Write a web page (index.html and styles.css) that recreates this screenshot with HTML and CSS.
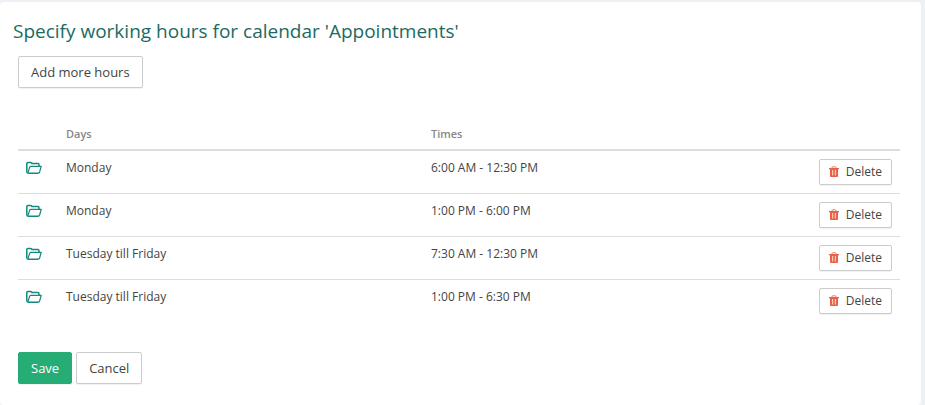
FILE: index.html
```
<!DOCTYPE html>
<html lang="en">
<head>
	<meta charset="UTF-8">
	<title>Working hours</title>
	<link rel="stylesheet" href="styles.css">
</head>
<body>
	<!-- icons used in the table rows -->
	<svg class="sprite" aria-hidden="true">
		<symbol id="folder" viewBox="0 0 16 14">
			<path d="M12 12.2H2.2Q.8 12.2.8 10.8V2.6Q.8 1.4 2 1.4H4.6Q5.8 1.4 6 2.6H12Q13 2.6 13 4V5.2" fill="none" stroke="#12897b" stroke-width="1.5" stroke-linejoin="round"/>
			<path d="M12 12.2Q13.2 12.2 13.6 11L15.2 5.4H5Q4 5.4 3.6 6.4L2 11.6" fill="none" stroke="#12897b" stroke-width="1.2" stroke-linejoin="round"/>
		</symbol>
		<symbol id="trash" viewBox="0 0 10 12">
			<path d="M3 2V1.5Q3 .8 3.7 .8H6.3Q7 .8 7 1.5V2" fill="none" stroke="#ec7a68"/>
			<path d="M0 2H10V3.2H9V10.2Q9 11 8 11H2Q1 11 1 10.2V3.2H0Z" fill="#ea5f4f"/>
			<path d="M3.5 4V9.5M6.5 4V9.5" stroke="#f8cf98"/>
			<path d="M5 4V9.5" stroke="#ee9080"/>
		</symbol>
	</svg>

	<div class="panel">
		<h1>Specify working hours for calendar 'Appointments'</h1>
		<div class="content">
			<button type="button" class="btn">Add more hours</button>

			<table class="hours">
				<thead>
					<tr>
						<th class="icon-col"></th>
						<th class="days-col">Days</th>
						<th>Times</th>
						<th class="action-col"></th>
					</tr>
				</thead>
				<tbody>
					<tr>
						<td><a href="#" aria-label="Edit"><svg class="folder"><use href="#folder"/></svg></a></td>
						<td>Monday</td>
						<td>6:00 AM - 12:30 PM</td>
						<td class="action"><button type="button" class="btn btn-small"><svg class="trash"><use href="#trash"/></svg>Delete</button></td>
					</tr>
					<tr>
						<td><a href="#" aria-label="Edit"><svg class="folder"><use href="#folder"/></svg></a></td>
						<td>Monday</td>
						<td>1:00 PM - 6:00 PM</td>
						<td class="action"><button type="button" class="btn btn-small"><svg class="trash"><use href="#trash"/></svg>Delete</button></td>
					</tr>
					<tr>
						<td><a href="#" aria-label="Edit"><svg class="folder"><use href="#folder"/></svg></a></td>
						<td>Tuesday till Friday</td>
						<td>7:30 AM - 12:30 PM</td>
						<td class="action"><button type="button" class="btn btn-small"><svg class="trash"><use href="#trash"/></svg>Delete</button></td>
					</tr>
					<tr>
						<td><a href="#" aria-label="Edit"><svg class="folder"><use href="#folder"/></svg></a></td>
						<td>Tuesday till Friday</td>
						<td>1:00 PM - 6:30 PM</td>
						<td class="action"><button type="button" class="btn btn-small"><svg class="trash"><use href="#trash"/></svg>Delete</button></td>
					</tr>
				</tbody>
			</table>

			<div class="buttons">
				<button type="submit" class="btn btn-save">Save</button>
				<button type="button" class="btn">Cancel</button>
			</div>
		</div>
	</div>
</body>
</html>
```

FILE: styles.css
```
*{
	box-sizing:border-box;
}
body{
	margin:0;
	padding:2px 4px 0 0;
	background:#edf1f5;
	font-family:"Open Sans", sans-serif;
	font-size:12px;
	line-height:18px;
	color:#444;
}
.sprite{
	display:none;
}
.panel{
	padding:16px 21px 21px 13px;
	background:#fff;
	border-radius:4px;
}
h1{
	margin:0 0 12px;
	font-size:19px;
	line-height:26px;
	font-weight:400;
	color:#1a6b62;
}
.content{
	padding-left:5px;
}
.btn{
	height:32px;
	padding:0 12px;
	border:1px solid #ccc;
	border-radius:2px;
	background:#fff;
	box-shadow:0 1px 1px rgba(0, 0, 0, .06);
	font-family:inherit;
	font-size:13px;
	line-height:18px;
	color:#444;
	cursor:pointer;
}
.btn-small{
	display:inline-flex;
	align-items:center;
	gap:7px;
	height:26px;
	padding:0 9px;
	font-size:12px;
}
.btn-save{
	border-color:#26ad75;
	background:#26ad75;
	font-weight:500;
	color:#fff;
}
.hours{
	width:100%;
	margin-top:37px;
	border-spacing:0;
	table-layout:fixed;
}
.hours th{
	padding:0 8px 6px;
	border-bottom:2px solid #ddd;
	font-size:11px;
	font-weight:600;
	text-align:left;
	color:#888;
}
.hours td{
	padding:8px;
	border-bottom:1px solid #ddd;
	vertical-align:top;
}
.hours tbody tr:last-child td{
	border-bottom:0;
}
.hours .icon-col{
	width:40px;
}
.hours .days-col{
	width:365px;
}
.hours .action-col{
	width:100px;
}
.hours .action{
	text-align:right;
}
.hours a{
	display:flex;
	align-items:center;
	height:18px;
}
.folder{
	width:16px;
	height:14px;
}
.trash{
	width:10px;
	height:12px;
}
.buttons{
	display:flex;
	gap:4px;
	margin-top:30px;
}
```
